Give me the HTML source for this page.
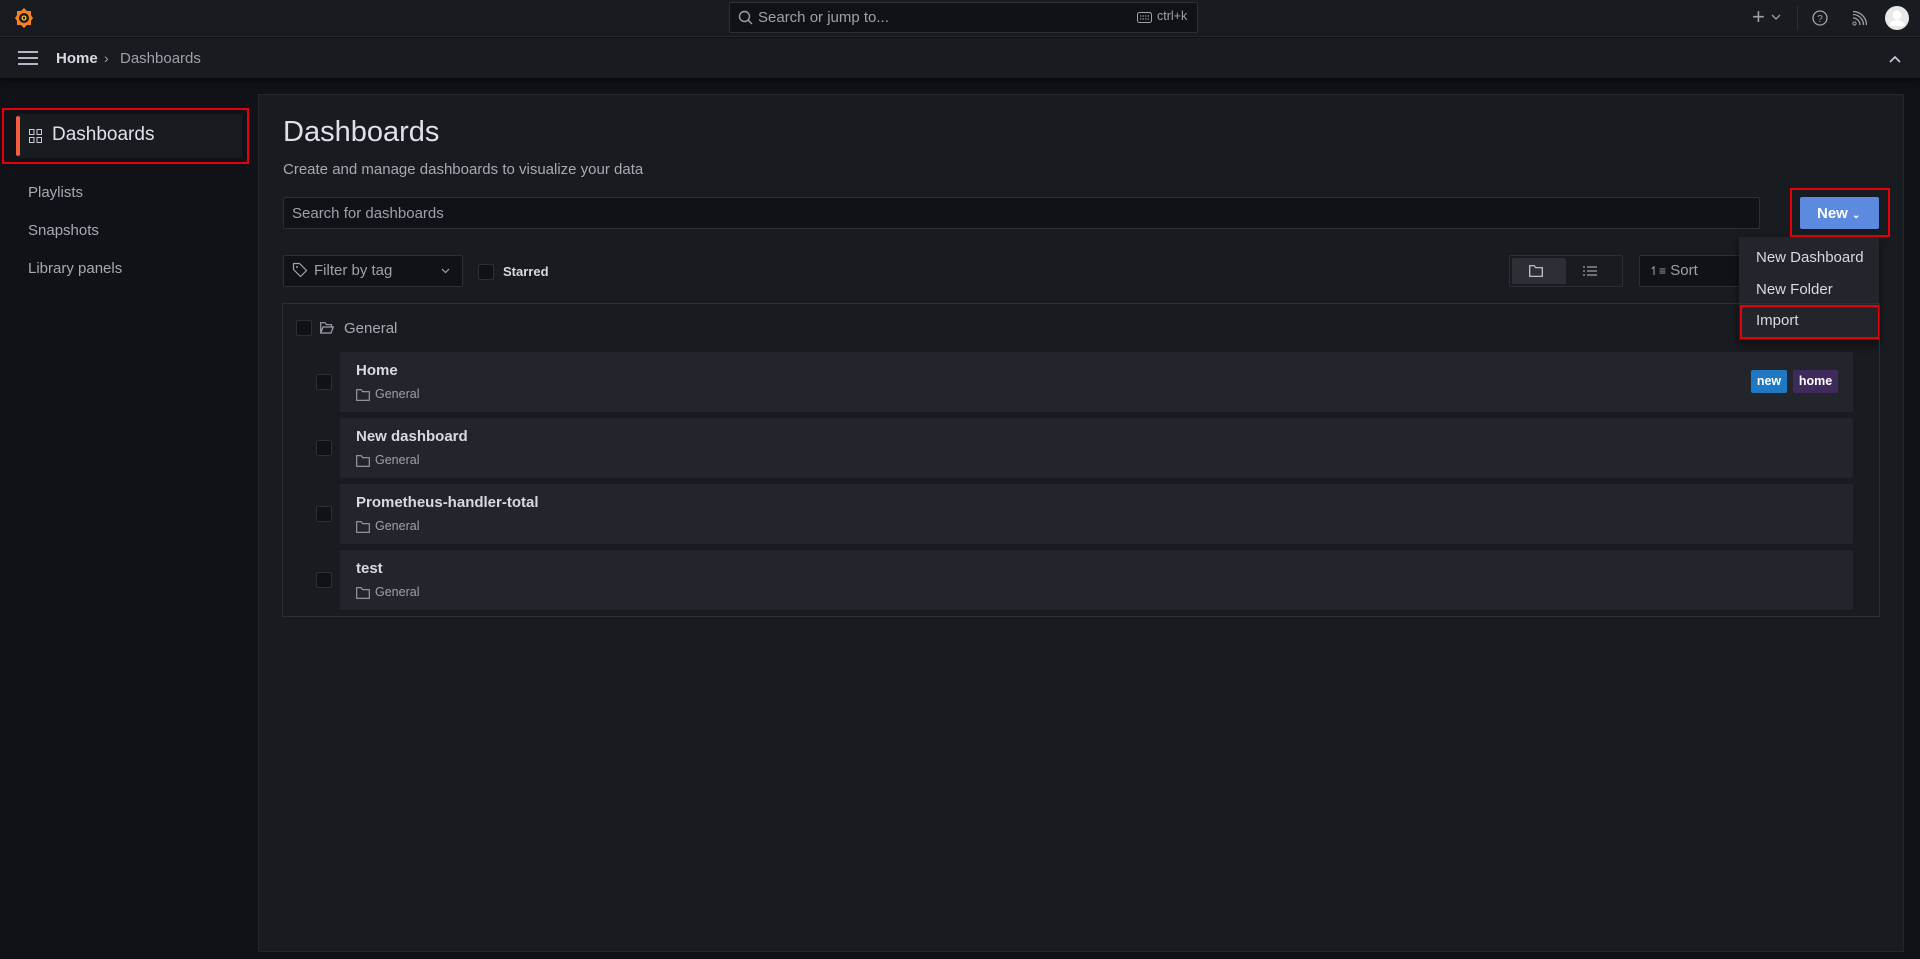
<!DOCTYPE html>
<html><head><meta charset="utf-8"><style>
*{box-sizing:border-box;margin:0;padding:0}
body{width:1920px;height:959px;background:#111217;font-family:"Liberation Sans",sans-serif;color:#ccccdc;position:relative;overflow:hidden;font-size:14px}
.a{position:absolute}
.cb{position:absolute;width:16px;height:16px;border:1px solid #2d2f36;background:#111217;border-radius:2px}
.row{position:absolute;left:340px;width:1513px;height:60px;background:#22252b;border-radius:2px}
.row .t{position:absolute;left:16px;top:10px;font-size:15px;color:#d8d9e2;font-weight:bold}
.row .g{position:absolute;left:16px;top:35px;font-size:12.5px;color:#9fa0ab}
.row .g svg{vertical-align:-3px;margin-right:5px}
.red{position:absolute;border:2px solid #e6000a}
</style></head><body>
<!-- top bar -->
<div class="a" style="left:0;top:0;width:1920px;height:37px;background:#181b1f;border-bottom:1px solid #2a2c31"></div>
<svg class="a" style="left:14px;top:6px" width="20" height="24" viewBox="0 0 20 24"><path d="M10 2 L13 5 L17 5 L17 9 L19 12 L17 15 L17 19 L13 19 L10 22 L7 19 L3 19 L3 15 L1 12 L3 9 L3 5 L7 5Z" fill="#f5821f"/><circle cx="10" cy="12" r="5" fill="#181b1f"/><circle cx="10" cy="12" r="2.6" fill="#fbb21b"/><circle cx="10" cy="12" r="1.2" fill="#181b1f"/></svg>
<div class="a" style="left:729px;top:2px;width:469px;height:31px;background:#111217;border:1px solid #2d2f36;border-radius:2px"></div>
<svg class="a" style="left:738px;top:10px" width="15" height="15" viewBox="0 0 15 15"><circle cx="6.5" cy="6.5" r="5" fill="none" stroke="#9fa0ab" stroke-width="1.4"/><path d="M10 10l4 4" stroke="#9fa0ab" stroke-width="1.4"/></svg>
<div class="a" style="left:758px;top:9px;font-size:15px;color:#9fa0ab">Search or jump to...</div>
<svg class="a" style="left:1137px;top:12px" width="15" height="11" viewBox="0 0 15 11"><rect x="0.5" y="0.5" width="14" height="10" rx="2" fill="none" stroke="#9fa0ab"/><path d="M3 4h9M3 7h9" stroke="#9fa0ab" stroke-dasharray="1.5 1"/></svg>
<div class="a" style="left:1157px;top:9px;font-size:12.5px;color:#9fa0ab">ctrl+k</div>
<div class="a" style="left:1752px;top:4px;font-size:22px;color:#9fa0ab;line-height:26px">+</div>
<svg class="a" style="left:1771px;top:14px" width="10" height="7" viewBox="0 0 10 7"><path d="M1 1l4 4 4-4" fill="none" stroke="#9fa0ab" stroke-width="1.3"/></svg>
<div class="a" style="left:1797px;top:6px;width:1px;height:24px;background:#2d2f36"></div>
<svg class="a" style="left:1812px;top:10px" width="16" height="16" viewBox="0 0 16 16"><circle cx="8" cy="8" r="7" fill="none" stroke="#9fa0ab" stroke-width="1.3"/><text x="8" y="12" font-size="10" text-anchor="middle" fill="#9fa0ab" font-family="Liberation Sans">?</text></svg>
<svg class="a" style="left:1852px;top:11px" width="15" height="15" viewBox="0 0 15 15"><circle cx="2.5" cy="12.5" r="1.6" fill="none" stroke="#9fa0ab"/><path d="M1 7a7 7 0 0 1 7 7M1 3.5a10.5 10.5 0 0 1 10.5 10.5M1 0.5a13.5 13.5 0 0 1 13.5 13.5" fill="none" stroke="#9fa0ab" stroke-width="1.3"/></svg>
<svg class="a" style="left:1885px;top:6px" width="24" height="24" viewBox="0 0 24 24"><circle cx="12" cy="12" r="12" fill="#e8e8e8"/><circle cx="12" cy="9" r="4.5" fill="#fff"/><path d="M4 20a8 6 0 0 1 16 0" fill="#fff"/></svg>
<!-- breadcrumb bar -->
<div class="a" style="left:0;top:38px;width:1920px;height:40px;background:#181b1f;box-shadow:0 2px 6px rgba(0,0,0,.6)"></div>
<svg class="a" style="left:18px;top:51px" width="20" height="14" viewBox="0 0 20 14"><path d="M0 1h20M0 7h20M0 13h20" stroke="#ccccdc" stroke-width="1.8"/></svg>
<div class="a" style="left:56px;top:50px;font-size:15px;color:#d8d9e2;font-weight:bold">Home</div>
<div class="a" style="left:104px;top:50px;font-size:14px;color:#9fa0ab">›</div>
<div class="a" style="left:120px;top:50px;font-size:15px;color:#9fa0ab">Dashboards</div>
<svg class="a" style="left:1889px;top:55px" width="12" height="8" viewBox="0 0 12 8"><path d="M1 7l5-5 5 5" fill="none" stroke="#ccccdc" stroke-width="1.6"/></svg>
<!-- sidebar -->
<div class="a" style="left:18px;top:114px;width:224px;height:44px;background:#181b1f"></div>
<div class="a" style="left:16px;top:116px;width:4px;height:40px;background:#f55f3e;border-radius:2px"></div>
<svg class="a" style="left:29px;top:129px" width="13" height="14" viewBox="0 0 13 14"><rect x="0.5" y="0.5" width="4.5" height="5" fill="none" stroke="#ccccdc"/><rect x="8" y="0.5" width="4.5" height="5" fill="none" stroke="#ccccdc"/><rect x="0.5" y="8.5" width="4.5" height="5" fill="none" stroke="#ccccdc"/><rect x="8" y="8.5" width="4.5" height="5" fill="none" stroke="#ccccdc"/></svg>
<div class="a" style="left:52px;top:124px;font-size:19px;color:#e0e0ea">Dashboards</div>
<div class="red" style="left:2px;top:108px;width:247px;height:56px"></div>
<div class="a" style="left:28px;top:184px;font-size:15px;color:#a8a9b4">Playlists</div>
<div class="a" style="left:28px;top:222px;font-size:15px;color:#a8a9b4">Snapshots</div>
<div class="a" style="left:28px;top:260px;font-size:15px;color:#a8a9b4">Library panels</div>
<!-- main panel -->
<div class="a" style="left:258px;top:94px;width:1646px;height:858px;background:#181b1f;border:1px solid #25272d"></div>
<div class="a" style="left:283px;top:116px;font-size:29px;color:#e0e0ea">Dashboards</div>
<div class="a" style="left:283px;top:161px;font-size:15px;color:#a8a9b4">Create and manage dashboards to visualize your data</div>
<div class="a" style="left:283px;top:197px;width:1477px;height:32px;background:#111217;border:1px solid #2d2f36;border-radius:2px"></div>
<div class="a" style="left:292px;top:205px;font-size:15px;color:#9fa0ab">Search for dashboards</div>
<div class="a" style="left:1800px;top:197px;width:79px;height:32px;background:#5b8adf;border-radius:2px;color:#fff;font-size:15px;font-weight:bold;padding:8px 0 0 17px">New <span style="font-size:10px">⌄</span></div>
<div class="red" style="left:1790px;top:188px;width:100px;height:49px"></div>
<!-- filters -->
<div class="a" style="left:283px;top:255px;width:180px;height:32px;background:#111217;border:1px solid #2d2f36;border-radius:2px"></div>
<svg class="a" style="left:292px;top:262px" width="16" height="16" viewBox="0 0 16 16"><path d="M1.5 1.5h6l7 7-6 6-7-7z" fill="none" stroke="#9fa0ab" stroke-width="1.2"/><circle cx="5" cy="5" r="1" fill="#9fa0ab"/></svg>
<div class="a" style="left:314px;top:262px;font-size:15px;color:#9fa0ab">Filter by tag</div>
<svg class="a" style="left:441px;top:268px" width="9" height="6" viewBox="0 0 9 6"><path d="M1 1l3.5 3.5L8 1" fill="none" stroke="#9fa0ab" stroke-width="1.2"/></svg>
<div class="cb" style="left:478px;top:264px"></div>
<div class="a" style="left:503px;top:264px;font-size:13px;color:#d8d9e2;font-weight:bold">Starred</div>
<div class="a" style="left:1509px;top:255px;width:114px;height:32px;border:1px solid #2d2f36;border-radius:2px"></div>
<div class="a" style="left:1512px;top:258px;width:54px;height:26px;background:#2d2f36;border-radius:2px"></div>
<svg class="a" style="left:1529px;top:265px" width="14" height="12" viewBox="0 0 14 12"><path d="M0.7 0.7h4.5l1.5 2h6.6v8.6H0.7z" fill="none" stroke="#ccccdc" stroke-width="1.2"/></svg>
<svg class="a" style="left:1583px;top:266px" width="14" height="10" viewBox="0 0 14 10"><path d="M0 1h2M4 1h10M0 5h2M4 5h10M0 9h2M4 9h10" stroke="#9fa0ab" stroke-width="1.2"/></svg>
<div class="a" style="left:1639px;top:255px;width:110px;height:32px;background:#111217;border:1px solid #2d2f36;border-radius:2px"></div>
<div class="a" style="left:1649px;top:262px;font-size:15px;color:#9fa0ab"><span style="font-size:12px">↿≡</span> Sort</div>
<!-- dropdown -->
<div class="a" style="left:1739px;top:237px;width:140px;height:103px;background:#22252b;box-shadow:0 4px 8px rgba(0,0,0,.5)"></div>
<div class="a" style="left:1756px;top:249px;font-size:15px;color:#d8d9e2">New Dashboard</div>
<div class="a" style="left:1756px;top:281px;font-size:15px;color:#d8d9e2">New Folder</div>
<div class="a" style="left:1756px;top:312px;font-size:15px;color:#d8d9e2">Import</div>
<div class="red" style="left:1740px;top:305px;width:140px;height:34px"></div>
<!-- list -->
<div class="a" style="left:282px;top:303px;width:1598px;height:314px;border:1px solid #2d2f36"></div>
<div class="cb" style="left:296px;top:320px"></div>
<svg class="a" style="left:320px;top:322px" width="14" height="12" viewBox="0 0 14 12"><path d="M0.7 11V0.7h4.3l1.5 2h5v2.5M0.7 11l2.3-6h10.3l-2.3 6z" fill="none" stroke="#9fa0ab" stroke-width="1.2"/></svg>
<div class="a" style="left:344px;top:320px;font-size:15px;color:#a8a9b4">General</div>

<div class="cb" style="left:316px;top:374px"></div>
<div class="row" style="top:352px"><div class="t">Home</div><div class="g"><svg width="14" height="12" viewBox="0 0 14 12"><path d="M0.7 0.7h4.5l1.5 2h6.6v8.6H0.7z" fill="none" stroke="#9fa0ab" stroke-width="1.1"/></svg>General</div>
<div class="a" style="left:1411px;top:18px;width:36px;height:23px;background:#1f78c1;border-radius:2px;color:#fff;font-size:12.5px;font-weight:bold;text-align:center;line-height:23px">new</div>
<div class="a" style="left:1453px;top:18px;width:45px;height:23px;background:#3f2b5b;border-radius:2px;color:#fff;font-size:12.5px;font-weight:bold;text-align:center;line-height:23px">home</div></div>
<div class="cb" style="left:316px;top:440px"></div>
<div class="row" style="top:418px"><div class="t">New dashboard</div><div class="g"><svg width="14" height="12" viewBox="0 0 14 12"><path d="M0.7 0.7h4.5l1.5 2h6.6v8.6H0.7z" fill="none" stroke="#9fa0ab" stroke-width="1.1"/></svg>General</div></div>
<div class="cb" style="left:316px;top:506px"></div>
<div class="row" style="top:484px"><div class="t">Prometheus-handler-total</div><div class="g"><svg width="14" height="12" viewBox="0 0 14 12"><path d="M0.7 0.7h4.5l1.5 2h6.6v8.6H0.7z" fill="none" stroke="#9fa0ab" stroke-width="1.1"/></svg>General</div></div>
<div class="cb" style="left:316px;top:572px"></div>
<div class="row" style="top:550px"><div class="t">test</div><div class="g"><svg width="14" height="12" viewBox="0 0 14 12"><path d="M0.7 0.7h4.5l1.5 2h6.6v8.6H0.7z" fill="none" stroke="#9fa0ab" stroke-width="1.1"/></svg>General</div></div>
</body></html>
